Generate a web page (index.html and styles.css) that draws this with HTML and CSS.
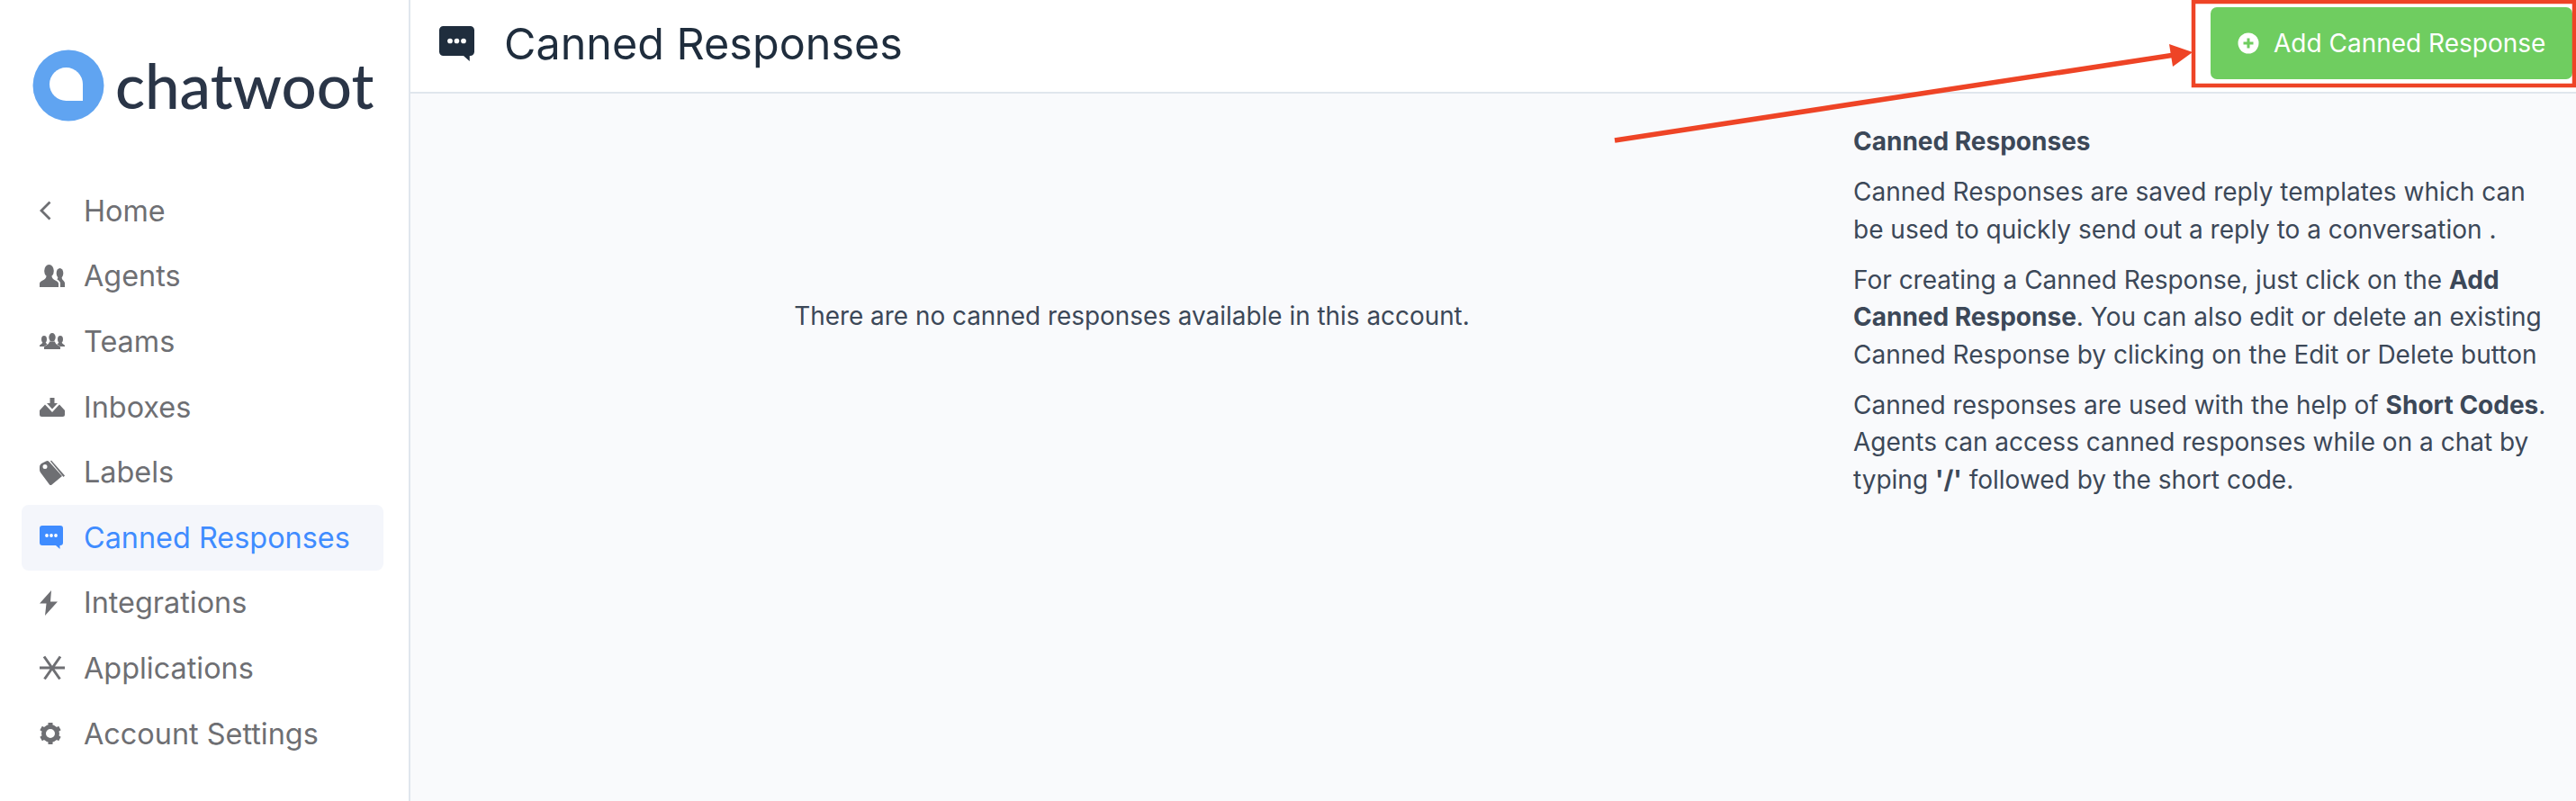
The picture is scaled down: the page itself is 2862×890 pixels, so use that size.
FILE: index.html
```html
<!DOCTYPE html>
<html lang="en">
<head>
  <meta charset="UTF-8">
  <title>Canned Responses</title>
  <link rel="stylesheet" href="styles.css">
</head>
<body>
  <svg class="icon-defs" width="0" height="0">
    <symbol id="bubble" viewBox="0 0 26 26">
      <path d="M3 0H23A3 3 0 0 1 26 3V19A3 3 0 0 1 23 22H22.500V26L18 22H3A3 3 0 0 1 0 19V3A3 3 0 0 1 3 0Z" fill="currentColor"/>
      <circle cx="8" cy="11" r="1.900" fill="#fff"/>
      <circle cx="13" cy="11" r="1.900" fill="#fff"/>
      <circle cx="18" cy="11" r="1.900" fill="#fff"/>
    </symbol>
  </svg>

  <div class="app">
    <aside class="sidebar">
      <div class="logo">
        <svg class="logo-mark" width="80" height="80" viewBox="0 0 80 80">
          <circle cx="40" cy="40" r="39.500" fill="#60a4f1"/>
          <path d="M56 57H37.500A18.500 18.500 0 1 1 56 38.500Z" fill="#fff"/>
        </svg>
        <span class="logo-text">chatwoot</span>
      </div>

      <nav class="nav">
        <a class="nav-item">
          <span class="nav-icon"><svg width="13" height="22" viewBox="0 0 13 22"><path d="M11.500 1.500L2 11L11.500 20.500" fill="none" stroke="currentColor" stroke-width="2.800"/></svg></span>
          Home
        </a>
        <a class="nav-item">
          <span class="nav-icon"><svg width="28" height="25" viewBox="0 0 28 25" fill="currentColor">
            <ellipse cx="10.500" cy="7" rx="5.300" ry="7"/>
            <path d="M0 25V21C0 18 7 17.500 7.500 13H13.500C14 17.500 21 18 21 21V25Z"/>
            <ellipse cx="22.500" cy="9.500" rx="3.800" ry="5.500"/>
            <path d="M23 25V20.500C23 19 21 17.500 19.500 16.500L20.500 14H24.500L25 16C25.500 17.500 28 18.500 28 20.500V25Z"/>
          </svg></span>
          Agents
        </a>
        <a class="nav-item">
          <span class="nav-icon"><svg width="28" height="18" viewBox="0 0 28 18" fill="currentColor">
            <ellipse cx="14" cy="4.800" rx="3.700" ry="4.800"/>
            <path d="M5 18V16C5 14 10.500 13.500 11 9.500H17C17.500 13.500 23 14 23 16V18Z"/>
            <ellipse cx="5" cy="7" rx="3" ry="4"/>
            <path d="M0 15V14C0 13 3 12.500 3.500 10H6.500C7 11.500 8.500 12 8.500 12.500L5 15Z"/>
            <ellipse cx="23" cy="7" rx="3" ry="4"/>
            <path d="M28 15V14C28 13 25 12.500 24.500 10H21.500C21 11.500 19.500 12 19.500 12.500L23 15Z"/>
          </svg></span>
          Teams
        </a>
        <a class="nav-item">
          <span class="nav-icon"><svg width="28" height="21" viewBox="0 0 28 21" fill="currentColor">
            <path d="M11.500 0H16.500V6H20L14 12.500L8 6H11.500Z"/>
            <path d="M6 7.500L0 14V18.500A2.500 2.500 0 0 0 2.500 21H25.500A2.500 2.500 0 0 0 28 18.500V14L22 7.500L20.500 9L14 16L7.500 9Z"/>
          </svg></span>
          Inboxes
        </a>
        <a class="nav-item">
          <span class="nav-icon"><svg width="28" height="28" viewBox="0 0 28 28" fill="currentColor">
            <path fill-rule="evenodd" d="M0 8Q0 5 3 3.500L7 1.500Q9 .5 10.500 2L25 18L13 28Q12 28.500 11 27.500L1 14Q0 12.500 0 11ZM6 5A2.500 2.500 0 1 0 6 10A2.500 2.500 0 1 0 6 5Z"/>
            <path d="M12 1.500L13 .5L28 17.500L26.500 19Z"/>
          </svg></span>
          Labels
        </a>
        <a class="nav-item is-active">
          <span class="nav-icon"><svg width="26" height="26"><use href="#bubble"/></svg></span>
          Canned Responses
        </a>
        <a class="nav-item">
          <span class="nav-icon"><svg width="20" height="28" viewBox="0 0 20 28"><path d="M13 0L0 14.500H7.500L6 28L20 12.500H12Z" fill="currentColor"/></svg></span>
          Integrations
        </a>
        <a class="nav-item">
          <span class="nav-icon"><svg width="28" height="28" viewBox="0 0 28 28"><path d="M0 14H28M5 1.500L22.500 26.500M23 1.500L5.500 26.500" fill="none" stroke="currentColor" stroke-width="3"/></svg></span>
          Applications
        </a>
        <a class="nav-item">
          <span class="nav-icon"><svg width="24" height="24" viewBox="0 0 24 24"><circle cx="12" cy="12" r="7.500" fill="none" stroke="currentColor" stroke-width="5"/><path d="M12 0V4M12 20V24M1.600 6L5 8M19 16L22.400 18M1.600 18L5 16M19 8L22.400 6" fill="none" stroke="currentColor" stroke-width="5"/></svg></span>
          Account Settings
        </a>
      </nav>
    </aside>

    <main class="main">
      <header class="page-header">
        <svg class="title-icon" width="39" height="39"><use href="#bubble"/></svg>
        <h1 class="page-title">Canned Responses</h1>
        <button class="add-btn" type="button">
          <svg width="24" height="24" viewBox="0 0 24 24">
            <circle cx="12" cy="12" r="11.500" fill="#fff"/>
            <path d="M12 6.500V17.500M6.500 12H17.500" stroke="#6fcd60" stroke-width="3"/>
          </svg>
          Add Canned Response
        </button>
      </header>

      <div class="content">
        <div class="empty-col">
          <p class="empty-text">There are no canned responses available in this account.</p>
        </div>
        <div class="help-col">
          <p><strong>Canned Responses</strong></p>
          <p>Canned Responses are saved reply templates which can be used to quickly send out a reply to a conversation .</p>
          <p>For creating a Canned Response, just click on the <strong>Add Canned Response</strong>. You can also edit or delete an existing Canned Response by clicking on the Edit or Delete button</p>
          <p>Canned responses are used with the help of <strong>Short Codes</strong>. Agents can access canned responses while on a chat by typing <strong>'/'</strong> followed by the short code.</p>
        </div>
      </div>
    </main>
  </div>

  <svg class="annotation" width="2862" height="890" viewBox="0 0 2862 890">
    <rect x="2437" y="2" width="423" height="93" fill="none" stroke="#ee4426" stroke-width="4.500"/>
    <path d="M1794 156L2416 61" fill="none" stroke="#ee4426" stroke-width="5.500"/>
    <path d="M2436 58L2410 49L2414 74Z" fill="#ee4426"/>
  </svg>
</body>
</html>
```

FILE: styles.css
```css
* { box-sizing: border-box; }
body { margin: 0; font-family: Inter, "Noto Sans", sans-serif; background: #fff; overflow: hidden; }
.icon-defs { position: absolute; }
.app { display: flex; height: 890px; }

.sidebar { width: 456px; flex-shrink: 0; border-right: 2px solid #e0e6ed; background: #fff; }
.logo { display: flex; align-items: center; gap: 12px; height: 198px; padding: 0 0 8px 36px; }
.logo-text { font-family: Lato, sans-serif; font-size: 69px; font-weight: 500; line-height: 80px; color: #2a3547; }
.nav { padding: 0 28px 0 24px; }
.nav-item { display: flex; align-items: center; height: 72.600px; padding-left: 20px; border-radius: 8px; font-size: 32.400px; color: #6e6f73; }
.nav-item.is-active { background: #f4f6fb; color: #3f8cff; }
.nav-icon { width: 49px; flex-shrink: 0; display: flex; align-items: center; }

.main { flex: 1; min-width: 0; display: flex; flex-direction: column; background: #f9fafc; }
.page-header { display: flex; align-items: center; height: 104px; padding: 0 4px 6px 32px; background: #fff; border-bottom: 2px solid #e0e6ed; }
.title-icon { color: #1f2d3d; flex-shrink: 0; }
.page-title { flex: 1; margin: 0 0 0 33px; font-size: 48.500px; font-weight: 400; color: #1f2d3d; }
.add-btn { display: flex; align-items: center; gap: 16px; width: 402px; height: 80px; padding: 0 0 0 30px; border: 0; border-radius: 7px; background: #6fcd60; color: #fff; font-family: inherit; font-size: 28px; white-space: nowrap; }

.content { flex: 1; display: flex; }
.empty-col { width: 1603px; flex-shrink: 0; text-align: center; padding-top: 227px; }
.empty-text { margin: 0; font-size: 27.900px; line-height: 41px; color: #3c4858; }
.help-col { flex: 1; padding: 33px 33px 0 0; font-size: 28px; line-height: 41.500px; color: #3c4858; }
.help-col p { margin: 0 0 14.500px; }
.help-col strong { font-weight: 700; }

.annotation { position: absolute; left: 0; top: 0; pointer-events: none; }
```
